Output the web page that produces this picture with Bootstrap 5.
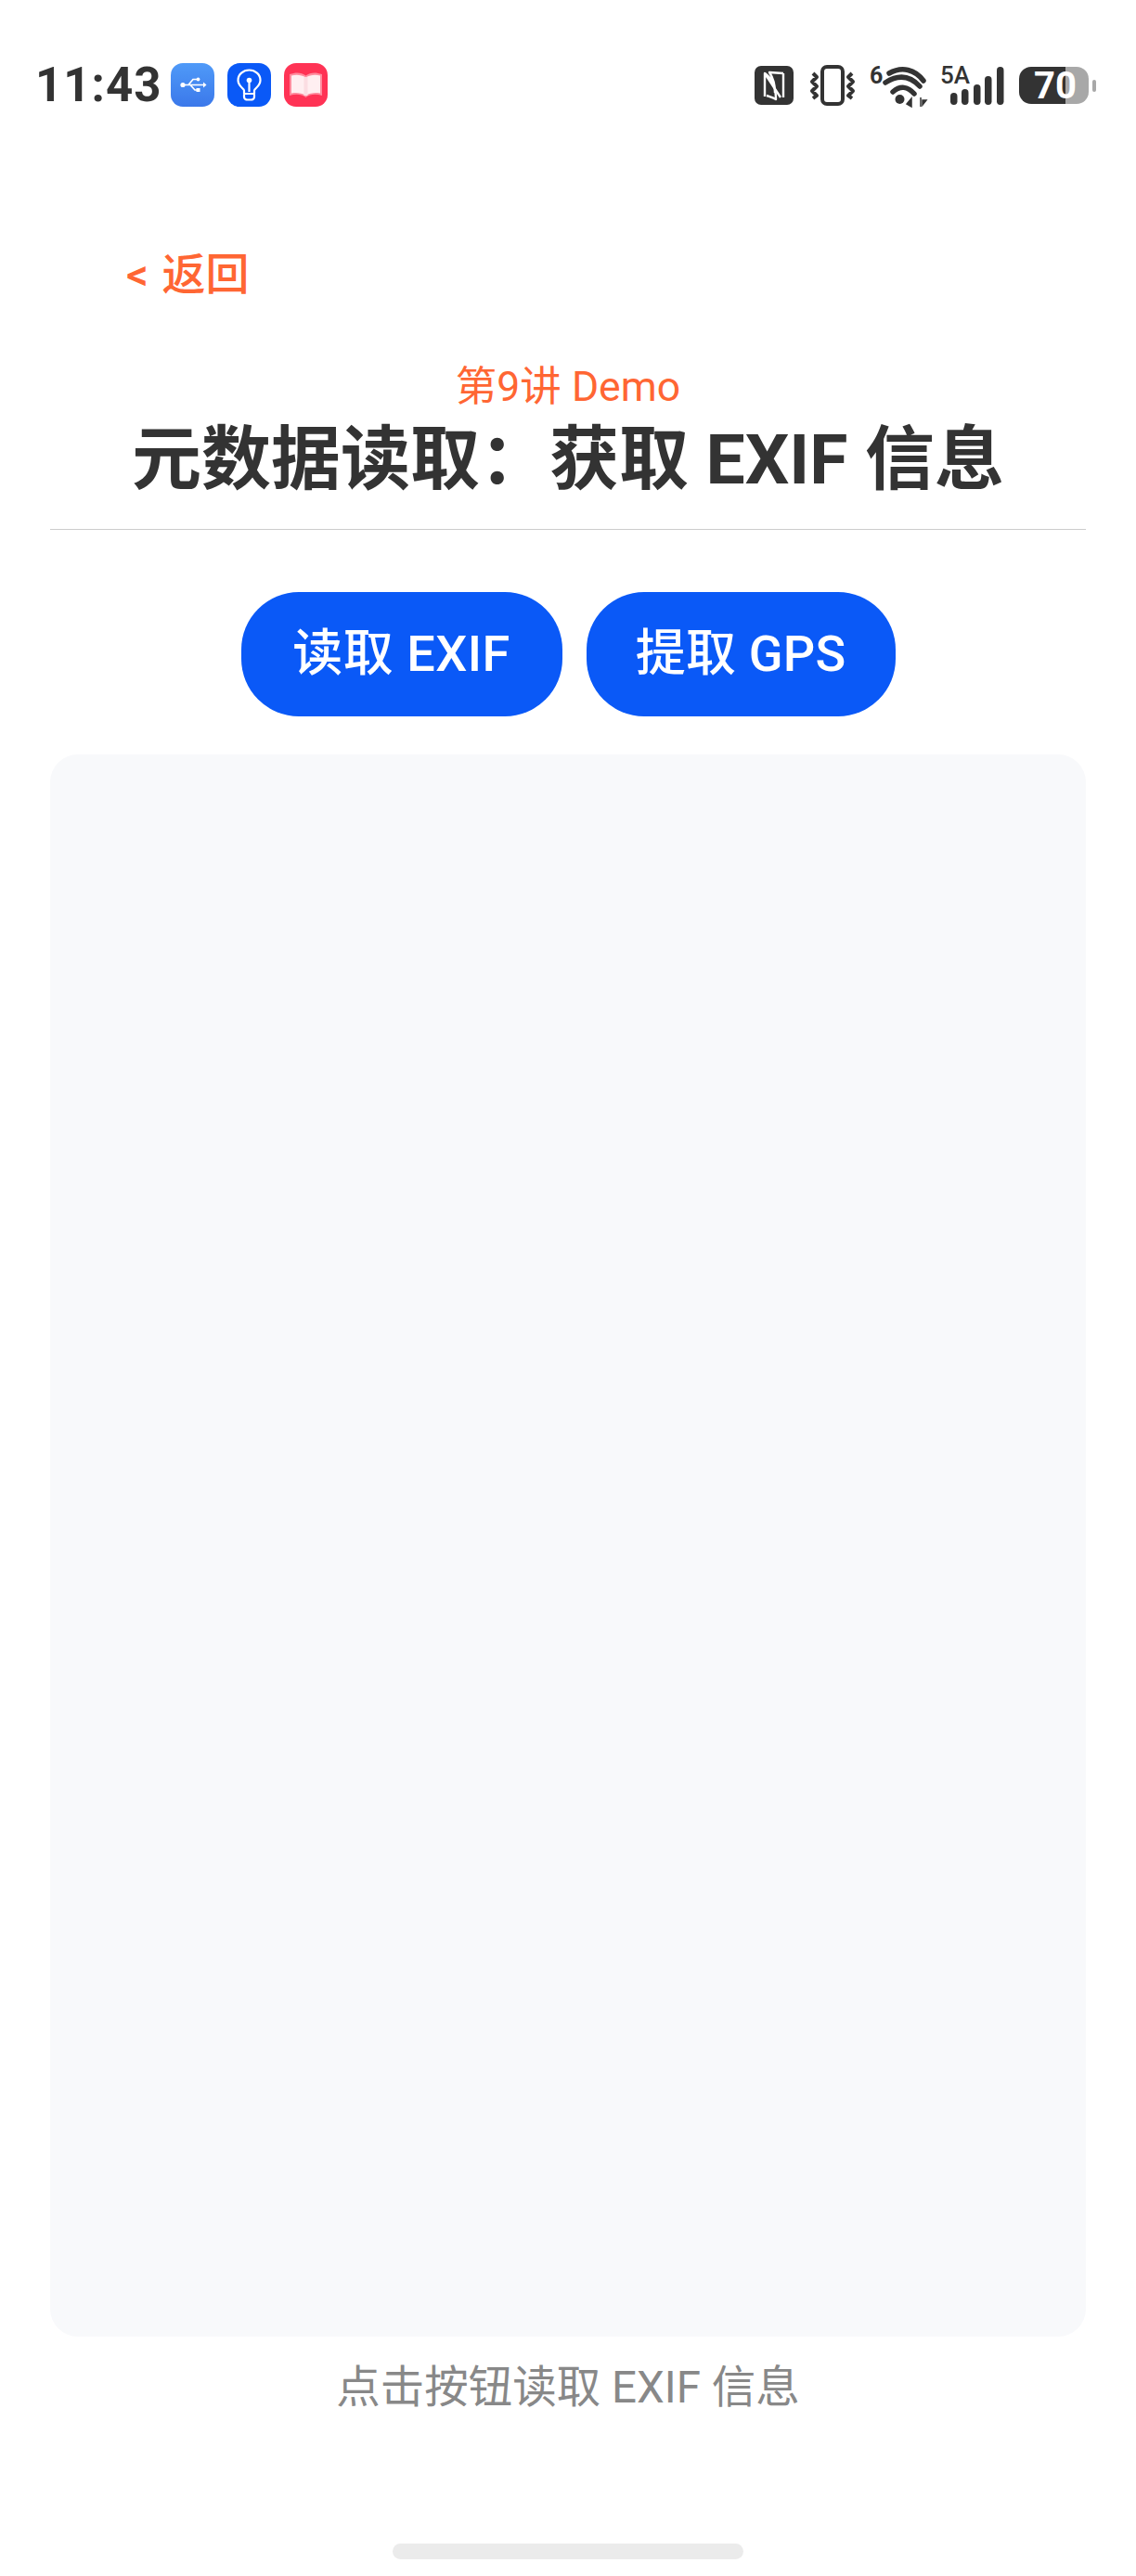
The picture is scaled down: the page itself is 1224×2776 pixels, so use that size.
<!DOCTYPE html>
<html lang="zh-CN">
<head>
<meta charset="utf-8">
<title>元数据读取</title>
<link href="https://cdn.jsdelivr.net/npm/bootstrap@5.3.0/dist/css/bootstrap.min.css" rel="stylesheet">
<style>
html,body{height:2776px;overflow:hidden;background:#fff}
body{font-family:Roboto,"Noto Sans CJK SC",sans-serif;color:#333}
.statusbar{height:115px;padding:68px 43px 0 38px}
.clock{font-size:51px;font-weight:700;line-height:47px;width:146px;color:#333;letter-spacing:1px;white-space:nowrap}
.appicons{gap:14px}
.appico{width:47px;height:47px;border-radius:13px;display:block}
.sysicons svg{display:block;margin-top:-8px}
.backlink{display:inline-block;margin:159px 0 0 136px;font-size:47px;line-height:44px;color:#FF6633;font-weight:500;text-decoration:none;word-spacing:3px}
.subtitle{margin-top:78px;font-size:44.500px;line-height:40px;color:#FF6633;text-align:center}
.pagetitle{margin:24px 0 0;font-size:75px;line-height:68px;font-weight:700;color:#333;text-align:center}
.rule{margin:41px 54px 0;height:1px;background:#ccc;opacity:1;border:0}
.actions{margin-top:67px;gap:26px;height:134px}
.pillbtn{height:134px;background:#0A59F7;border:0;color:#fff;font-size:54px;font-weight:500;line-height:50px;border-radius:62px;padding:0;white-space:nowrap}
.pillbtn:hover{background:#0A59F7;color:#fff}
.btn-a{width:346px;letter-spacing:.5px}
.btn-b{width:333px;letter-spacing:.2px}
.panel{margin:41px 54px 0;height:1705px;background:#F8F9FB;border-radius:30px}
.hint{margin-top:33px;font-size:47.500px;line-height:44px;color:#888;text-align:center}
.homebar{width:378px;height:17px;margin:146px auto 0;background:#EBEBEB;border-radius:9px}
</style>
</head>
<body>
<div class="statusbar d-flex justify-content-between align-items-start">
  <div class="d-flex align-items-start">
    <div class="clock">11:43</div>
    <div class="appicons d-flex">
      <svg class="appico" viewBox="0 0 47 47"><defs><linearGradient id="usbg" x1="0" y1="0" x2="0" y2="1"><stop offset="0" stop-color="#4F9AF8"/><stop offset="1" stop-color="#3B78EA"/></linearGradient></defs><rect width="47" height="47" fill="url(#usbg)"/><path d="M13 23.500H37M19 23.500L24 17.500H29M21 23.500L26 29H29" fill="none" stroke="#fff" stroke-width="1.700"/><circle cx="13" cy="23.500" r="2.600" fill="#fff"/><circle cx="29.500" cy="17.500" r="1.900" fill="#fff"/><rect x="27.500" y="27" width="4" height="4" fill="#fff"/><path d="M35 20.500L38.500 23.500L35 26.500Z" fill="#fff"/></svg>
      <svg class="appico" viewBox="0 0 47 47"><rect width="47" height="47" fill="#0A59F7"/><path d="M18 33V29.500C18 27.500 11.500 25 11.500 18.500C11.500 12 17 7.500 23.500 7.500S35.500 12 35.500 18.500C35.500 25 29 27.500 29 29.500V33Z" fill="none" stroke="#fff" stroke-width="2.200" stroke-linejoin="round"/><path d="M23.500 19V31" stroke="#fff" stroke-width="2.200"/><circle cx="23.500" cy="18.500" r="2.800" fill="#fff"/><path d="M18 33.500V36.500C18 38.500 20 39.500 21.500 39.500H25.500C27 39.500 29 38.500 29 36.500V33.500" fill="none" stroke="#fff" stroke-width="2.200"/></svg>
      <svg class="appico" viewBox="0 0 47 47"><rect width="47" height="47" fill="#FF3355"/><path d="M6 12C13 9.500 19 10 23.500 13.500C28 10 34 9.500 41 12V35C34 33 28 33.500 23.500 37C19 33.500 13 33 6 35Z" fill="#FF8C9E"/><path d="M8 13.500C13 12 19 12.500 23.500 15.500C28 12.500 34 12 39 13.500V32.500C34 31.500 28 32 23.500 35C19 32 13 31.500 8 32.500Z" fill="#FFEFF1"/><path d="M23.500 15V35" stroke="#FBDDE2" stroke-width="4"/></svg>
    </div>
  </div>
  <div class="sysicons d-flex align-items-start" aria-label="status">
    <svg width="368" height="60" viewBox="813 60 368 60">
      <!-- NFC -->
      <rect x="813" y="71" width="42" height="42" rx="7" fill="#333"/>
      <path d="M824 104V79L841 105" fill="none" stroke="#fff" stroke-width="2.400" stroke-linejoin="round"/>
      <path d="M844 79V105M824 79C833 85 836 95 836 107C833 105 829 104 826 103M844 79L829 78C833 84 835 92 835 100" fill="none" stroke="#fff" stroke-width="2.400" stroke-linejoin="round"/>
      <!-- vibrate -->
      <rect x="886" y="72" width="22" height="40" rx="5" fill="none" stroke="#333" stroke-width="4"/>
      <path d="M876 79L880 83L875 88L880 93L875 98L880 103L876 106M918 79L914 83L919 88L914 93L919 98L914 103L918 106" fill="none" stroke="#333" stroke-width="4" stroke-linejoin="round"/>
      <!-- wifi -->
      <text x="937" y="90" font-family="Roboto" font-size="25" font-weight="700" fill="#333">6</text>
      <path d="M958 79C972 71 986 75 995 87M954 89C968 80 980 81 991 93M962 99C970 92 978 93 985 101" fill="none" stroke="#333" stroke-width="5.500" stroke-linecap="round"/>
      <circle cx="969.500" cy="107" r="5" fill="#333"/>
      <path d="M982 115V106L977 112ZM992 105V115M994 108L998 108L994 113Z" fill="#333" stroke="#333" stroke-width="1.500"/>
      <!-- 5A signal -->
      <text x="1013" y="90" font-family="Roboto" font-size="26" font-weight="500" fill="#333">5A</text>
      <g fill="#333"><rect x="1024" y="100" width="7.500" height="13" rx="3.700"/><rect x="1036" y="96" width="7.500" height="17" rx="3.700"/><rect x="1049" y="91" width="7.500" height="22" rx="3.700"/><rect x="1061" y="82" width="7.500" height="31" rx="3.700"/><rect x="1074" y="72" width="7.500" height="41" rx="3.700"/></g>
      <!-- battery -->
      <path d="M1148 72H1111A13 13 0 0 0 1098 85V99A13 13 0 0 0 1111 112H1148Z" fill="#333"/>
      <path d="M1148 72H1160A13 13 0 0 1 1173 85V99A13 13 0 0 1 1160 112H1148Z" fill="#A8A8A8"/>
      <rect x="1177" y="86" width="4" height="13" rx="2" fill="#A8A8A8"/>
      <text x="1114" y="106" font-family="Roboto" font-size="40" font-weight="700" fill="#fff">70</text>
    </svg>
  </div>
</div>

<a class="backlink" href="#">&lt; 返回</a>
<div class="subtitle">第9讲 Demo</div>
<h1 class="pagetitle">元数据读取：获取 EXIF 信息</h1>
<hr class="rule">
<div class="actions d-flex justify-content-center">
  <button type="button" class="btn pillbtn btn-a">读取 EXIF</button>
  <button type="button" class="btn pillbtn btn-b">提取 GPS</button>
</div>
<div class="panel"></div>
<div class="hint">点击按钮读取 EXIF 信息</div>
<div class="homebar"></div>
<script src="https://cdn.jsdelivr.net/npm/bootstrap@5.3.0/dist/js/bootstrap.bundle.min.js"></script>
</body>
</html>
